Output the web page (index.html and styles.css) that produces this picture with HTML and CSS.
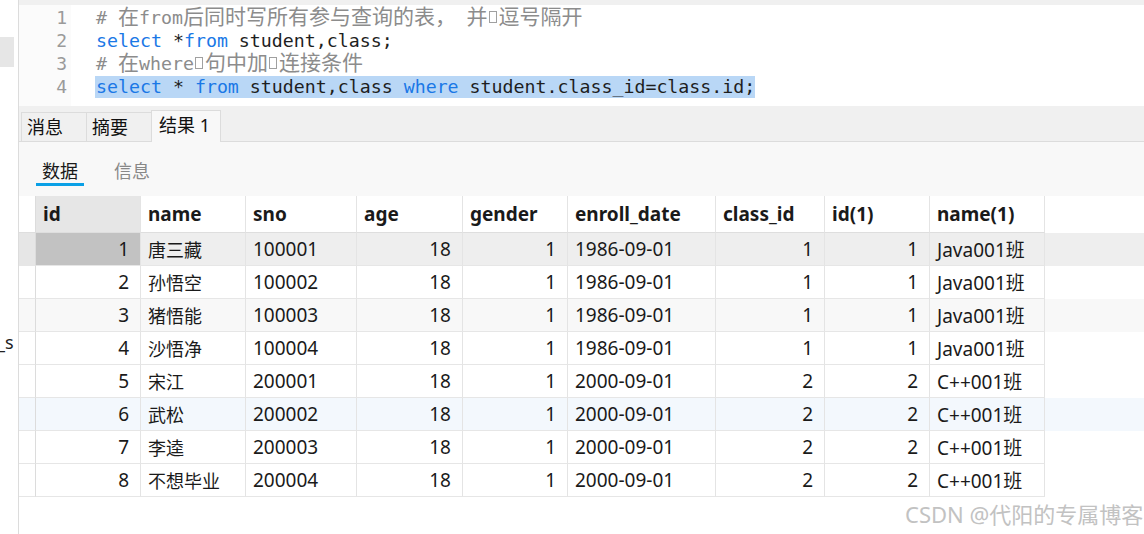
FILE: index.html
```html
<!DOCTYPE html>
<html lang="zh">
<head>
<meta charset="utf-8">
<title>查询结果</title>
<link rel="stylesheet" href="styles.css">
</head>
<body>
<div class="app">
  <aside class="side">
    <div class="side-block"></div>
    <div class="side-text">_s</div>
  </aside>
  <main class="main">
    <div class="top-strip"></div>
    <div class="editor">
      <div class="gutter">
        <div class="ln">1</div>
        <div class="ln">2</div>
        <div class="ln">3</div>
        <div class="ln">4</div>
      </div>
      <div class="code">
        <div class="ln"><span class="cm"># <span class="cj">在</span>from<span class="cj">后同时写所有参与查询的表，　并</span><span class="tofu"></span><span class="cj">逗号隔开</span></span></div>
        <div class="ln"><span class="kw">select</span> *<span class="kw">from</span> student,class;</div>
        <div class="ln"><span class="cm"># <span class="cj">在</span>where<span class="tofu"></span><span class="cj">句中加</span><span class="tofu"></span><span class="cj">连接条件</span></span></div>
        <div class="ln"><span class="sel"><span class="kw">select</span> * <span class="kw">from</span> student,class <span class="kw">where</span> student.class_id=class.id;</span></div>
      </div>
    </div>
    <div class="tabs">
      <div class="tab">消息</div>
      <div class="tab">摘要</div>
      <div class="tab active">结果 1</div>
    </div>
    <div class="subtabs">
      <div class="subtab on">数据</div>
      <div class="subtab">信息</div>
    </div>
    <div class="table">
      <div class="row head">
        <div class="c ind"></div>
        <div class="c sel-col">id</div>
        <div class="c">name</div>
        <div class="c">sno</div>
        <div class="c">age</div>
        <div class="c">gender</div>
        <div class="c">enroll_date</div>
        <div class="c">class_id</div>
        <div class="c">id(1)</div>
        <div class="c">name(1)</div>
      </div>
      <div class="row cur">
        <div class="c ind"></div>
        <div class="c n focus">1</div>
        <div class="c zh">唐三藏</div>
        <div class="c">100001</div>
        <div class="c n">18</div>
        <div class="c n">1</div>
        <div class="c">1986-09-01</div>
        <div class="c n">1</div>
        <div class="c n">1</div>
        <div class="c">Java001班</div>
      </div>
      <div class="row">
        <div class="c ind"></div>
        <div class="c n">2</div>
        <div class="c zh">孙悟空</div>
        <div class="c">100002</div>
        <div class="c n">18</div>
        <div class="c n">1</div>
        <div class="c">1986-09-01</div>
        <div class="c n">1</div>
        <div class="c n">1</div>
        <div class="c">Java001班</div>
      </div>
      <div class="row alt">
        <div class="c ind"></div>
        <div class="c n">3</div>
        <div class="c zh">猪悟能</div>
        <div class="c">100003</div>
        <div class="c n">18</div>
        <div class="c n">1</div>
        <div class="c">1986-09-01</div>
        <div class="c n">1</div>
        <div class="c n">1</div>
        <div class="c">Java001班</div>
      </div>
      <div class="row">
        <div class="c ind"></div>
        <div class="c n">4</div>
        <div class="c zh">沙悟净</div>
        <div class="c">100004</div>
        <div class="c n">18</div>
        <div class="c n">1</div>
        <div class="c">1986-09-01</div>
        <div class="c n">1</div>
        <div class="c n">1</div>
        <div class="c">Java001班</div>
      </div>
      <div class="row">
        <div class="c ind"></div>
        <div class="c n">5</div>
        <div class="c zh">宋江</div>
        <div class="c">200001</div>
        <div class="c n">18</div>
        <div class="c n">1</div>
        <div class="c">2000-09-01</div>
        <div class="c n">2</div>
        <div class="c n">2</div>
        <div class="c">C++001班</div>
      </div>
      <div class="row hover">
        <div class="c ind"></div>
        <div class="c n">6</div>
        <div class="c zh">武松</div>
        <div class="c">200002</div>
        <div class="c n">18</div>
        <div class="c n">1</div>
        <div class="c">2000-09-01</div>
        <div class="c n">2</div>
        <div class="c n">2</div>
        <div class="c">C++001班</div>
      </div>
      <div class="row">
        <div class="c ind"></div>
        <div class="c n">7</div>
        <div class="c zh">李逵</div>
        <div class="c">200003</div>
        <div class="c n">18</div>
        <div class="c n">1</div>
        <div class="c">2000-09-01</div>
        <div class="c n">2</div>
        <div class="c n">2</div>
        <div class="c">C++001班</div>
      </div>
      <div class="row">
        <div class="c ind"></div>
        <div class="c n">8</div>
        <div class="c zh">不想毕业</div>
        <div class="c">200004</div>
        <div class="c n">18</div>
        <div class="c n">1</div>
        <div class="c">2000-09-01</div>
        <div class="c n">2</div>
        <div class="c n">2</div>
        <div class="c">C++001班</div>
      </div>
    </div>
  </main>
  <div class="wm">CSDN @代阳的专属博客</div>
</div>
</body>
</html>
```

FILE: styles.css
```css
html, body {
  margin: 0;
  padding: 0;
}
body {
  width: 1144px;
  height: 534px;
  overflow: hidden;
  background: #fff;
  font-family: "Noto Sans", "Noto Sans CJK SC", sans-serif;
  color: #1a1a1a;
}
.app {
  position: relative;
  display: flex;
  height: 534px;
}
.side {
  width: 18px;
  flex: none;
  border-right: 1px solid #dcdcdc;
  display: flex;
  flex-direction: column;
  overflow: hidden;
}
.side-block {
  margin-top: 37px;
  width: 14px;
  height: 30px;
  background: #e6e6e6;
}
.side-text {
  margin-top: 265px;
  margin-left: -3px;
  font-size: 18px;
  line-height: 20px;
  white-space: nowrap;
  color: #222;
}
.main {
  flex: 1;
  min-width: 0;
  display: flex;
  flex-direction: column;
}
.top-strip {
  height: 5px;
  background: #f0f0f0;
}
.editor {
  height: 101px;
  display: flex;
  background: #fff;
}
.gutter {
  width: 52px;
  box-sizing: border-box;
  padding: 1px 4px 0 0;
  background: #fbfbfb;
  text-align: right;
  font: 18px/23px "DejaVu Sans Mono", monospace;
  color: #9a9a9a;
}
.code {
  padding: 1px 0 0 25px;
  font: 18.25px/23px "DejaVu Sans Mono", monospace;
  color: #1e1e1e;
}
.ln {
  height: 23px;
  white-space: pre;
}
.kw {
  color: #1a78e6;
}
.cm {
  color: #8c8c8c;
}
.cj {
  font-family: "Noto Sans CJK SC", sans-serif;
  font-size: 21px;
  line-height: 0;
}
.tofu {
  display: inline-block;
  width: 8px;
  height: 12px;
  margin: 0 1.5px;
  box-sizing: border-box;
  border: 1px solid #a0a0a0;
  vertical-align: 1px;
}
.sel {
  display: inline-block;
  height: 22px;
  line-height: 22px;
  margin: 1px 0 0 -1px;
  padding: 0 0 0 1px;
  vertical-align: top;
  background: #b9d7f6;
}
.tabs {
  height: 36px;
  box-sizing: border-box;
  background: #f0f0f0;
  border-bottom: 1px solid #dcdcdc;
  display: flex;
  align-items: flex-end;
  padding-left: 2px;
}
.tab {
  width: 65px;
  height: 29px;
  box-sizing: border-box;
  border-top: 1px solid #dcdcdc;
  border-left: 1px solid #dcdcdc;
  padding-left: 5px;
  font-size: 18px;
  line-height: 28px;
  color: #111;
}
.tab.active {
  width: 70px;
  height: 32px;
  margin-bottom: -1px;
  padding-left: 7px;
  background: #f8f8f8;
  border-right: 1px solid #dcdcdc;
}
.subtabs {
  height: 54px;
  box-sizing: border-box;
  background: #f8f8f8;
  display: flex;
  gap: 24px;
  padding: 17px 0 0 17px;
}
.subtab {
  height: 27px;
  box-sizing: border-box;
  padding: 0 6px;
  font-size: 18px;
  line-height: 24px;
  color: #888;
}
.subtab.on {
  color: #1a1a1a;
  border-bottom: 3px solid #0aa0e6;
}
.table {
  flex: 1;
  background: #fff;
}
.row {
  display: grid;
  grid-template-columns: 17px 105px 105px 111px 106px 105px 148px 109px 105px 115px;
  height: 33px;
}
.row.head {
  height: 37px;
  background: #fff;
  font-weight: bold;
}
.c {
  box-sizing: border-box;
  border-right: 1px solid #e4e4e4;
  border-bottom: 1px solid #e6e6e6;
  padding: 0 8px 0 7px;
  display: flex;
  align-items: center;
  font-size: 19px;
  white-space: nowrap;
  overflow: hidden;
}
.c.zh {
  font-size: 18px;
}
.c.n {
  justify-content: flex-end;
  padding: 0 11px 0 4px;
}
.c.ind {
  padding: 0;
  border-right-color: #dcdcdc;
}
.head .c {
  border-bottom-color: #dedede;
}
.head .sel-col {
  background: #e6e6e6;
}
.row.cur {
  background: #eeeeee;
}
.row.cur .ind {
  background: #e6e6e6;
}
.row.cur .focus {
  background: #c2c2c2;
}
.row.alt {
  background: #f8f8f8;
}
.row.hover {
  background: #f3f8fd;
}
.wm {
  position: absolute;
  left: 905px;
  top: 500px;
  font-family: "Noto Sans", "Noto Sans CJK SC", sans-serif;
  font-size: 22px;
  line-height: 28px;
  color: #c2c2c2;
  white-space: nowrap;
}
```
